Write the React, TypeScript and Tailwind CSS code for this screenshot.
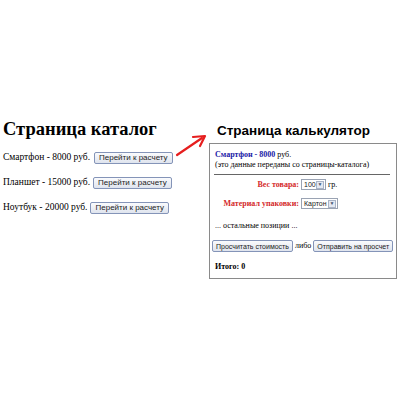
import React from "react";

const serif = { fontFamily: '"Liberation Serif", "Times New Roman", serif' };

function Btn({ children, small }: { children: React.ReactNode; small?: boolean }) {
  return (
    <span
      className={`inline-flex items-center justify-center h-[12px] border border-[#8494b8] rounded-[2px] bg-gradient-to-b from-[#fafbfd] to-[#dfe4ee] leading-none text-[#222] whitespace-nowrap ${
        small ? "text-[7px] px-[3px]" : "text-[8px] px-[4px]"
      }`}
      style={{ fontFamily: '"Liberation Sans", Arial, sans-serif' }}
    >
      {children}
    </span>
  );
}

function Select({ value, width }: { value: string; width: string }) {
  return (
    <span
      className={`inline-flex items-center justify-between h-[11px] border border-[#9aa3b3] bg-white pl-[2px] pr-[1px] text-[7px] leading-none text-[#222] ${width}`}
      style={{ fontFamily: '"Liberation Sans", Arial, sans-serif' }}
    >
      {value}
      <span className="flex items-center justify-center w-[8px] h-[8px] border border-[#a9b3c6] bg-[#e3e8f1] text-[5px] text-[#4a5670]">
        ▼
      </span>
    </span>
  );
}

const products = [
  { name: "Смартфон - 8000 руб.", gap: "ml-[4px]" },
  { name: "Планшет - 15000 руб.", gap: "ml-[3px]" },
  { name: "Ноутбук - 20000 руб.", gap: "ml-[3px]" },
];

export default function App() {
  return (
    <div className="relative w-[400px] h-[400px] bg-white flex text-black" style={serif}>
      <div className="w-[209px] pl-[3px] pt-[118px]">
        <h1 className="text-[18.5px] font-bold leading-[22px] mb-[11px]">Страница каталог</h1>
        <div className="flex flex-col gap-[13px]">
          {products.map((p) => (
            <div key={p.name} className="flex items-center h-[12px] text-[9.5px]">
              <span>{p.name}</span>
              <span className={p.gap}>
                <Btn>Перейти к расчету</Btn>
              </span>
            </div>
          ))}
        </div>
      </div>

      <div className="w-[188px] pt-[123px]">
        <h2
          className="text-[13.5px] font-bold leading-[16px] ml-[8px] mb-[4px]"
          style={{ fontFamily: '"Liberation Sans", Arial, sans-serif' }}
        >
          Страница калькулятор
        </h2>
        <div className="border border-[#8a8a8a] h-[136px] px-[5px] pt-[6px] text-[8px] leading-[10px]">
          <div>
            <span className="font-bold text-[#1a1aa6]">Смартфон - 8000</span> руб.
          </div>
          <div>(это данные переданы со страницы-каталога)</div>
          <div className="h-px bg-[#666] mt-[4px] mb-[4px] -ml-[1px] mr-[1px]" />
          <div className="grid grid-cols-[86px_auto] items-center gap-y-[8px]">
            <span className="text-right font-bold text-[#d42a2a] pr-[2px]">Вес товара:</span>
            <span className="flex items-center gap-[2px]">
              <Select value="100" width="w-[25px]" />
              <span>гр.</span>
            </span>
            <span className="text-right font-bold text-[#d42a2a] pr-[2px]">Материал упаковки:</span>
            <span className="flex items-center">
              <Select value="Картон" width="w-[37px]" />
            </span>
          </div>
          <div className="mt-[12px]">... остальные позиции ...</div>
          <div className="flex items-center mt-[9px] -ml-[3px]">
            <Btn small>Просчитать стоимость</Btn>
            <span className="mx-[2px]">либо</span>
            <Btn small>Отправить на просчет</Btn>
          </div>
          <div className="font-bold mt-[10px]">Итого: 0</div>
        </div>
      </div>

      <svg className="absolute left-[174px] top-[132px]" width="36" height="26" viewBox="0 0 36 26">
        <line x1="3" y1="23" x2="28" y2="6" stroke="#e61e1e" strokeWidth="2.2" strokeLinecap="round" />
        <polyline points="19,5 31,4 26,14" fill="none" stroke="#e61e1e" strokeWidth="2.2" strokeLinecap="round" strokeLinejoin="round" />
      </svg>
    </div>
  );
}
